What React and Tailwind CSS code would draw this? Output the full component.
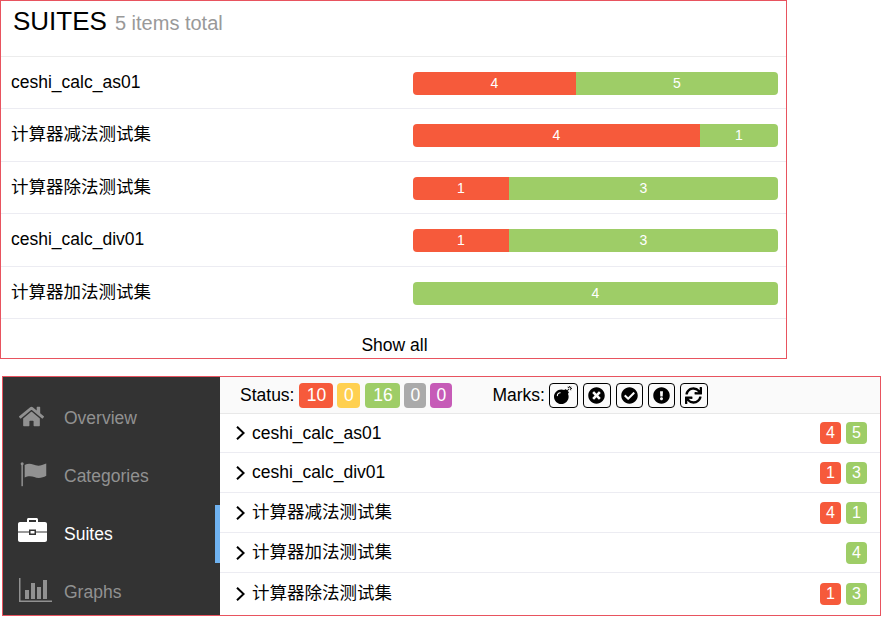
import React from "react";
import {
  FaHome,
  FaBomb,
  FaTimesCircle,
  FaCheckCircle,
  FaExclamationCircle,
  FaSync,
} from "react-icons/fa";

const cjk = "font-['Liberation_Sans','Noto_Sans_CJK_SC',sans-serif]";

const suites = [
  { name: "ceshi_calc_as01", failed: 4, passed: 5, split: 163 },
  { name: "计算器减法测试集", failed: 4, passed: 1, split: 287 },
  { name: "计算器除法测试集", failed: 1, passed: 3, split: 96 },
  { name: "ceshi_calc_div01", failed: 1, passed: 3, split: 96 },
  { name: "计算器加法测试集", failed: 0, passed: 4, split: 0 },
];

const tree = [
  { name: "ceshi_calc_as01", failed: 4, passed: 5 },
  { name: "ceshi_calc_div01", failed: 1, passed: 3 },
  { name: "计算器减法测试集", failed: 4, passed: 1 },
  { name: "计算器加法测试集", failed: 0, passed: 4 },
  { name: "计算器除法测试集", failed: 1, passed: 3 },
];

function FlagIcon({ className }) {
  return (
    <svg viewBox="0 0 32 26" className={className} fill="currentColor">
      <rect x="1.500" y="2" width="1.600" height="24" />
      <circle cx="2.300" cy="2" r="1.600" />
      <path d="M5 3.500c3-1.800 6-1.800 9-.6s6 1.600 9.500.6c1.500-.4 3-1 4.500-1.600v13c-2.500 1.500-5 2.300-8 2.300-3.500 0-6-1.800-9.500-1.800-2 0-4 .5-5.500 1.400z" />
    </svg>
  );
}

function BriefcaseIcon({ className }) {
  return (
    <svg viewBox="0 0 29 24" className={className} fill="currentColor">
      <path fillRule="evenodd" d="M9 4V1.500C9 .7 9.700 0 10.500 0h8c.8 0 1.500.7 1.500 1.500V4h-2V2h-7v2z" />
      <path d="M2 4h25c1.100 0 2 .9 2 2v7.500H18v-2h-7v2H0V6c0-1.100.9-2 2-2z" />
      <path d="M0 14.500h11V17h7v-2.500h11V22c0 1.100-.9 2-2 2H2c-1.100 0-2-.9-2-2z" />
      <rect x="12.500" y="13" width="4" height="2.500" />
    </svg>
  );
}

function ChartIcon({ className }) {
  return (
    <svg viewBox="0 0 33 24" className={className} fill="currentColor">
      <rect x="0" y="0" width="1.500" height="24" />
      <rect x="0" y="22.500" width="33" height="1.500" />
      <rect x="6" y="12" width="4" height="9" />
      <rect x="12" y="5" width="4" height="16" />
      <rect x="18" y="9" width="4" height="12" />
      <rect x="24" y="2" width="4" height="19" />
    </svg>
  );
}

function SuiteBar({ failed, passed, split }) {
  return (
    <div className="flex w-[365px] h-[23px] mt-[2px] rounded-[4px] overflow-hidden text-white text-[14px] leading-[23px] text-center">
      {failed > 0 && (
        <div className="bg-[#f65a3b]" style={{ width: split }}>
          {failed}
        </div>
      )}
      <div className="bg-[#9ecd67] flex-1">{passed}</div>
    </div>
  );
}

function Badge({ color, children, className }) {
  return (
    <span className={`inline-flex items-center justify-center rounded-[4px] text-white ${color} ${className}`}>
      {children}
    </span>
  );
}

function NavItem({ icon, label, active }) {
  return (
    <div className={`relative flex items-center h-[58px] pl-[15px] ${active ? "text-white" : "text-[#919191]"}`}>
      <div className="w-[46px] flex items-center">{icon}</div>
      <span>{label}</span>
      {active && <div className="absolute right-0 top-0 bottom-0 w-[5px] bg-[#6fb2f0]" />}
    </div>
  );
}

function MarkButton({ children, className }) {
  return (
    <span className={`flex items-center justify-center h-[25px] border border-black rounded-[4px] text-[17px] ${className}`}>
      {children}
    </span>
  );
}

export default function App() {
  return (
    <div className={`w-[882px] h-[617px] bg-white text-black text-[17.500px] overflow-hidden ${cjk}`}>
      <div className="w-[787px] h-[359px] border border-[#e8535f] flex flex-col">
        <div className="h-[55.500px] shrink-0 pl-[12px] pt-[4px] leading-[33px] border-b border-[#ececec]">
          <span className="text-[26px]">SUITES</span>
          <span className="text-[20px] text-[#999] ml-[8px]">5 items total</span>
        </div>
        {suites.map((s) => (
          <div key={s.name} className="flex items-center shrink-0 h-[52.500px] pl-[10px] border-b border-[#ececf2]">
            <span className="w-[402px] -mt-[1px]">{s.name}</span>
            <SuiteBar failed={s.failed} passed={s.passed} split={s.split} />
          </div>
        ))}
        <div className="flex-1 flex items-center justify-center pt-[12px] pl-[2px] leading-[24px]">Show all</div>
      </div>

      <div className="ml-[2px] mt-[17px] w-[879px] h-[240px] border border-[#e8535f] flex">
        <div className="w-[217px] bg-[#333] pt-[12px] overflow-hidden shrink-0">
          <NavItem icon={<FaHome className="text-[25px] ml-[1px] -mt-[4px]" />} label="Overview" />
          <NavItem icon={<FlagIcon className="w-[30px] h-[26px] ml-[2px] -mt-[4px]" />} label="Categories" />
          <NavItem icon={<BriefcaseIcon className="w-[29px] h-[24px] -mt-[8px]" />} label="Suites" active />
          <NavItem icon={<ChartIcon className="w-[33px] h-[24px] ml-[1px] -mt-[5px] shrink-0" />} label="Graphs" />
        </div>

        <div className="flex-1 flex flex-col min-w-0">
          <div className="h-[37px] bg-[#fafafa] border-b border-[#e8e8e8] flex items-center pl-[20px]">
            <span className="mr-[5px]">Status:</span>
            <div className="flex gap-[4px]">
              <Badge color="bg-[#f65a3b]" className="w-[34px] h-[25px]">10</Badge>
              <Badge color="bg-[#ffd050]" className="w-[23px] h-[25px]">0</Badge>
              <Badge color="bg-[#9ecd67]" className="w-[35px] h-[25px] ml-[1px]">16</Badge>
              <Badge color="bg-[#aaa]" className="w-[22px] h-[25px]">0</Badge>
              <Badge color="bg-[#c65bb7]" className="w-[22px] h-[25px]">0</Badge>
            </div>
            <span className="ml-[40px] mr-[4px]">Marks:</span>
            <div className="flex gap-[5px]">
              <MarkButton className="w-[29px]"><FaBomb className="text-[18px]" /></MarkButton>
              <MarkButton className="w-[28px]"><FaTimesCircle /></MarkButton>
              <MarkButton className="w-[27px]"><FaCheckCircle /></MarkButton>
              <MarkButton className="w-[27px]"><FaExclamationCircle /></MarkButton>
              <MarkButton className="w-[28px]"><FaSync /></MarkButton>
            </div>
          </div>
          {tree.map((s, i) => (
            <div
              key={s.name}
              className={`${i === 0 ? "h-[39px]" : i === 4 ? "h-[41px]" : "h-[40px]"} flex items-center pl-[16px] pr-[13px] border-b border-[#ececf2] last:border-b-0`}
            >
              <svg viewBox="0 0 9 14" className="w-[9px] h-[14px] shrink-0" fill="none" stroke="currentColor" strokeWidth="2">
                <path d="M1 .7 7.600 7 1 13.300" />
              </svg>
              <span className={`flex-1 ml-[7px] ${i === 0 ? "" : "-mt-[1px]"}`}>{s.name}</span>
              <div className="flex gap-[5px] text-[16px]">
                {s.failed > 0 && <Badge color="bg-[#f65a3b]" className="w-[21px] h-[22px]">{s.failed}</Badge>}
                <Badge color="bg-[#9ecd67]" className="w-[21px] h-[22px]">{s.passed}</Badge>
              </div>
            </div>
          ))}
        </div>
      </div>
    </div>
  );
}
